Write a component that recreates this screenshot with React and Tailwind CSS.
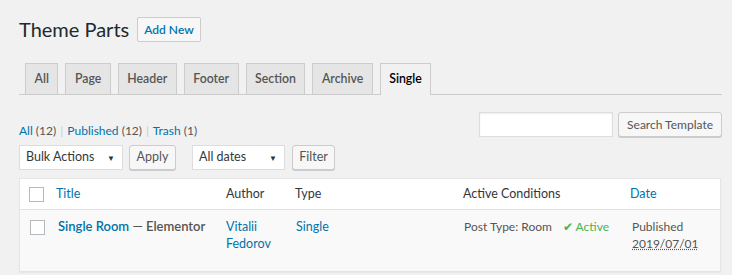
export default function App() {
  const tabs = ["All", "Page", "Header", "Footer", "Section", "Archive"];
  return (
    <div className="min-h-[275px] w-[732px] bg-[#f1f1f1] text-[12px] text-[#444] pl-[19px] pr-[10px]" style={{ fontFamily: 'Lato, "Open Sans", sans-serif' }}>
      <div className="flex items-center pt-[16px] h-[43px]">
        <h1 className="text-[20px] font-normal text-[#23282d] leading-[29px]">Theme Parts</h1>
        <button className="ml-[8px] h-[25px] px-[6px] border border-[#ccc] bg-[#f7f7f7] rounded-[2px] text-[12px] font-semibold text-[#0073aa] leading-none">Add New</button>
      </div>
      <div className="mt-[20px] flex items-end gap-[7px] pl-[6px] border-b border-[#ccc] h-[32px]">
        {tabs.map((t) => (
          <div key={t} className="h-[31px] px-[8.5px] flex items-center border border-b-0 border-[#ccc] bg-[#e5e5e5] text-[12.3px] font-semibold text-[#555]">{t}</div>
        ))}
        <div className="h-[32px] -mb-px px-[8.5px] flex items-center border border-b-0 border-[#ccc] bg-[#f1f1f1] text-[12.3px] font-semibold text-[#000]">Single</div>
      </div>
      <div className="flex justify-end mt-[17px] gap-[5px]">
        <div className="w-[134px] h-[25px] border border-[#ddd] bg-white shadow-[inset_0_1px_2px_rgba(0,0,0,0.07)]"></div>
        <button className="h-[25px] px-[8px] border border-[#ccc] bg-[#f7f7f7] rounded-[3px] shadow-[0_1px_0_#ccc] text-[12px] text-[#555] leading-none">Search Template</button>
      </div>
      <div className="-mt-[15px] leading-[17px] text-[12px]">
        <span className="text-[#0073aa]">All</span> <span className="text-[#555]">(12)</span> <span className="text-[#ccc] mx-[1px]">|</span> <span className="text-[#0073aa]">Published</span> <span className="text-[#555]">(12)</span> <span className="text-[#ccc] mx-[1px]">|</span> <span className="text-[#0073aa]">Trash</span> <span className="text-[#555]">(1)</span>
      </div>
      <div className="flex items-center mt-[6px] h-[25px]">
        <div className="w-[104px] h-[25px] border border-[#ddd] bg-white flex items-center justify-between pl-[6px] pr-[7px] text-[#32373c] text-[12.5px]">
          <span>Bulk Actions</span><span className="text-[8px] text-[#333]">▼</span>
        </div>
        <button className="ml-[6px] h-[25px] w-[47px] border border-[#ccc] bg-[#f7f7f7] rounded-[3px] shadow-[0_1px_0_#ccc] text-[12.5px] text-[#555] leading-none">Apply</button>
        <div className="ml-[16px] w-[93px] h-[25px] border border-[#ddd] bg-white flex items-center justify-between pl-[6px] pr-[7px] text-[#32373c] text-[12.5px]">
          <span>All dates</span><span className="text-[8px] text-[#333]">▼</span>
        </div>
        <button className="ml-[7px] h-[25px] w-[43px] border border-[#ccc] bg-[#f7f7f7] rounded-[3px] shadow-[0_1px_0_#ccc] text-[12.5px] text-[#555] leading-none">Filter</button>
      </div>
      <div className="mt-[8px] w-[702px] border border-[#e5e5e5] bg-white shadow-[0_1px_1px_rgba(0,0,0,0.04)]">
        <div className="h-[31px] flex items-center border-b border-[#e1e1e1] text-[12.5px]">
          <div className="w-[36px] pl-[9px]"><div className="w-[15px] h-[15px] border border-[#b4b9be] bg-white"></div></div>
          <div className="w-[170px] text-[#0073aa]">Title</div>
          <div className="w-[69px] text-[#32373c]">Author</div>
          <div className="w-[168px] text-[#32373c]">Type</div>
          <div className="w-[167px] text-[#32373c]">Active Conditions</div>
          <div className="text-[#0073aa]">Date</div>
        </div>
        <div className="h-[61px] bg-[#f9f9f9] flex items-start pt-[8px] leading-[17px] text-[12px]">
          <div className="w-[36px] pl-[10px] pt-[2px]"><div className="w-[15px] h-[15px] border border-[#b4b9be] bg-white"></div></div>
          <div className="w-[170px] pl-[2px] text-[#555] font-semibold whitespace-nowrap text-[13px]"><span className="text-[#0073aa]">Single Room</span> — Elementor</div>
          <div className="w-[69px] text-[#0073aa] text-[12.5px]">Vitalii<br />Fedorov</div>
          <div className="w-[168px] pl-[1px] text-[#0073aa] text-[12.5px]">Single</div>
          <div className="w-[167px] pl-[1px] flex text-[#555]">
            <span>Post Type: Room</span>
            <span className="ml-[11px] text-[#46b450]">✔ Active</span>
          </div>
          <div className="pl-[2px] text-[#555]">Published<br /><span className="underline decoration-dotted">2019/07/01</span></div>
        </div>
      </div>
    </div>
  );
}
